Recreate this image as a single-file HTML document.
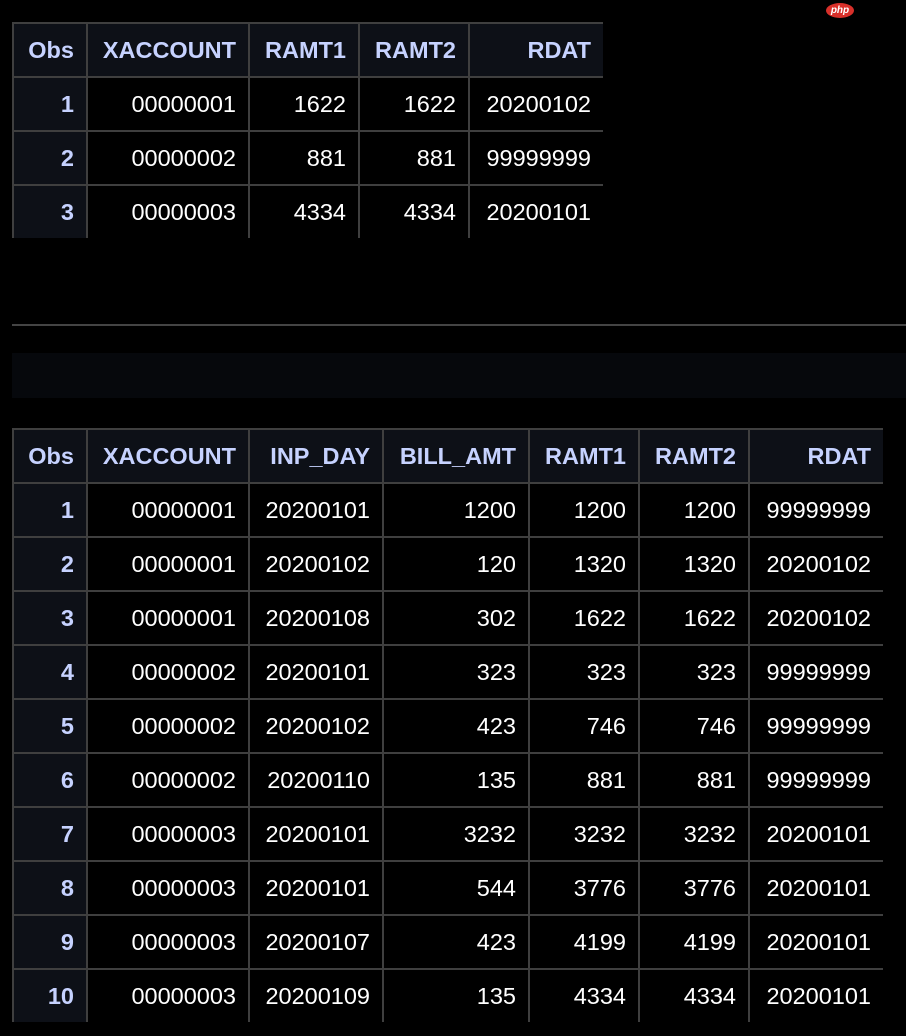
<!DOCTYPE html>
<html><head><meta charset="utf-8"><style>
body{margin:0;background:#000;width:906px;height:1036px;position:relative;overflow:hidden;font-family:"Liberation Sans",Arial,sans-serif}
table{position:absolute;border-collapse:collapse;table-layout:fixed;left:12px}
td,th{border:2px solid #3f3f3f;height:52px;padding:0 12px 0 0;text-align:right;font-size:23.5px;color:#fff;white-space:nowrap;overflow:hidden}
th{background:#0d1017;color:#c6d2ff;font-weight:bold}
td.o{background:#0d1017;color:#c6d2ff;font-weight:bold}
tr:last-child td{border-bottom:none}
th:last-child,td:last-child{border-right:none}
</style></head><body>
<div style="position:absolute;left:826px;top:3px;width:28px;height:15px;border-radius:50%;background:#d8302a;color:#fff;font-size:10px;font-style:italic;font-weight:bold;text-align:center;line-height:15px">php</div>
<table style="top:22px;width:590px">
<colgroup><col style="width:74px"><col style="width:162px"><col style="width:110px"><col style="width:110px"><col style="width:134px"></colgroup>
<tr><th>Obs</th><th>XACCOUNT</th><th>RAMT1</th><th>RAMT2</th><th>RDAT</th></tr>
<tr><td class="o">1</td><td>00000001</td><td>1622</td><td>1622</td><td>20200102</td></tr>
<tr><td class="o">2</td><td>00000002</td><td>881</td><td>881</td><td>99999999</td></tr>
<tr><td class="o">3</td><td>00000003</td><td>4334</td><td>4334</td><td>20200101</td></tr>
</table>
<div style="position:absolute;left:12px;top:324px;width:894px;height:2px;background:#444"></div>
<div style="position:absolute;left:12px;top:353px;width:894px;height:45px;background:#06080c"></div>
<table style="top:428px;width:870px">
<colgroup><col style="width:74px"><col style="width:162px"><col style="width:134px"><col style="width:146px"><col style="width:110px"><col style="width:110px"><col style="width:134px"></colgroup>
<tr><th>Obs</th><th>XACCOUNT</th><th>INP_DAY</th><th>BILL_AMT</th><th>RAMT1</th><th>RAMT2</th><th>RDAT</th></tr>
<tr><td class="o">1</td><td>00000001</td><td>20200101</td><td>1200</td><td>1200</td><td>1200</td><td>99999999</td></tr>
<tr><td class="o">2</td><td>00000001</td><td>20200102</td><td>120</td><td>1320</td><td>1320</td><td>20200102</td></tr>
<tr><td class="o">3</td><td>00000001</td><td>20200108</td><td>302</td><td>1622</td><td>1622</td><td>20200102</td></tr>
<tr><td class="o">4</td><td>00000002</td><td>20200101</td><td>323</td><td>323</td><td>323</td><td>99999999</td></tr>
<tr><td class="o">5</td><td>00000002</td><td>20200102</td><td>423</td><td>746</td><td>746</td><td>99999999</td></tr>
<tr><td class="o">6</td><td>00000002</td><td>20200110</td><td>135</td><td>881</td><td>881</td><td>99999999</td></tr>
<tr><td class="o">7</td><td>00000003</td><td>20200101</td><td>3232</td><td>3232</td><td>3232</td><td>20200101</td></tr>
<tr><td class="o">8</td><td>00000003</td><td>20200101</td><td>544</td><td>3776</td><td>3776</td><td>20200101</td></tr>
<tr><td class="o">9</td><td>00000003</td><td>20200107</td><td>423</td><td>4199</td><td>4199</td><td>20200101</td></tr>
<tr><td class="o">10</td><td>00000003</td><td>20200109</td><td>135</td><td>4334</td><td>4334</td><td>20200101</td></tr>
</table>
</body></html>
